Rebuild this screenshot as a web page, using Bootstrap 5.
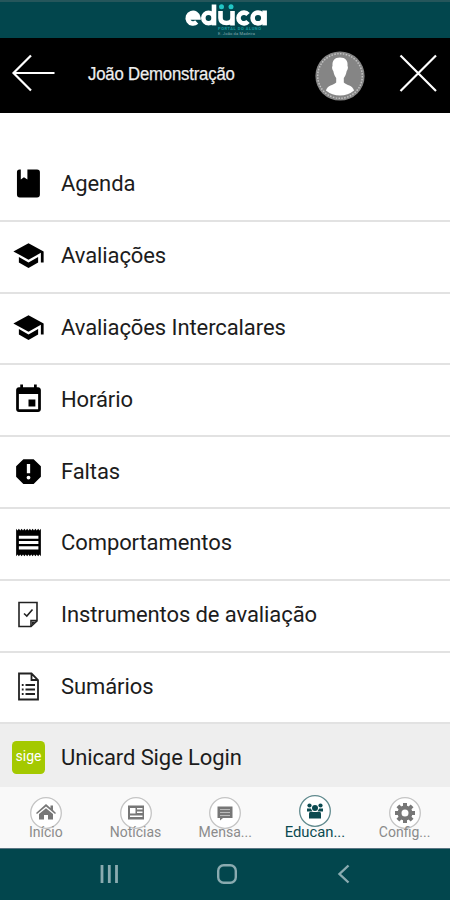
<!DOCTYPE html>
<html lang="pt">
<head>
<meta charset="utf-8">
<meta name="viewport" content="width=device-width, initial-scale=1">
<title>Educa</title>
<link href="https://cdn.jsdelivr.net/npm/bootstrap@5.3.0/dist/css/bootstrap.min.css" rel="stylesheet">
<style>
body { font-family: Roboto, sans-serif; width: 450px; height: 900px; background: #fff; }
svg { display: block; flex: none; }
.brand-bar { height: 38px; background: #02464d; border-top: 2px solid #25565b; padding-left: 184px; }
.top-bar { height: 75px; background: #000; padding-left: 11px; padding-right: 12px; }
.line-icon { margin-bottom: 5px; }
.user-name { font: 18px/24px "Liberation Sans", sans-serif; color: #eee; margin-left: 33px; width: 227px; padding-bottom: 3px; letter-spacing: -.2px; white-space: nowrap; }
.user-name span { display: inline-block; transform: scaleX(.93); transform-origin: left; -webkit-text-stroke: .25px #eee; }
.menu-list { height: 674px; padding-top: 37px; overflow: hidden; }
.menu-row { height: 71.8px; padding: 0 0 2px 12px; gap: 16px; border-bottom: 2px solid #e2e2e2; font-size: 22px; color: #1c1c1c; }
.menu-row > span { letter-spacing: -.09px; white-space: nowrap; }
.menu-row.active-row { background: #eee; border: 0; padding-bottom: 5px; }
.tab-bar { height: 61px; background: #f9f9f9; padding-left: 1px; }
.tab-cell { width: 89.7px; flex: none; color: #8b8b8b; font-size: 14px; line-height: 16px; padding-top: 9px; }
.tab-cell span { margin-top: -6px; }
.tab-cell.current { color: #0b4a50; font-size: 14.8px; padding-top: 7px; }
.tab-cell.current span { margin-top: -4px; }
.system-bar { height: 52px; background: #02464d; border-top: 1px solid #5b7684; padding: 0 99px 2px 99px; }
.home-key { margin-right: 3px; }
</style>
<script src="https://cdn.jsdelivr.net/npm/bootstrap@5.3.0/dist/js/bootstrap.bundle.min.js"></script>
</head>
<body class="d-flex flex-column overflow-hidden">
<header class="brand-bar flex-shrink-0">
  <svg width="90" height="34" viewBox="0 2 90 34">
    <g fill="none" stroke="#fff" stroke-width="4.6">
      <path d="M4 17.500H14.300A5.300 5.300 0 1 0 12.700 22"/>
      <circle cx="24.500" cy="18" r="5.200"/><path d="M30 4.500V25.400"/>
      <path d="M36.500 11V18Q36.500 23 42.500 23T48.500 18V11M48.500 18V25.400"/>
      <path d="M64 14.500A5.400 5.400 0 1 0 64 21.500"/>
      <circle cx="74" cy="18" r="5.400"/><path d="M80.600 10.500V25.400"/>
    </g>
    <g fill="#22c5c4"><circle cx="37.500" cy="6.800" r="2.500"/><circle cx="47" cy="6.800" r="2.500"/></g>
    <text x="34" y="30" font-size="4" font-weight="700" font-family="Roboto, sans-serif" fill="#169a9e" textLength="43">PORTAL DO ALUNO</text>
    <text x="34" y="35" font-size="4" font-family="Roboto, sans-serif" fill="#86a9ad" textLength="37">E. João da Madeira</text>
  </svg>
</header>
<nav class="top-bar d-flex align-items-center flex-shrink-0">
  <svg class="line-icon" width="44" height="40" viewBox="0 0 44 40" fill="none" stroke="#fff" stroke-width="2.200"><path d="M20 2.500 2.500 20 20 37.500M2.500 20H43.500"/></svg>
  <div class="user-name"><span>João Demonstração</span></div>
  <svg width="50" height="50" viewBox="0 0 50 50">
    <circle cx="25" cy="25" r="24.600" fill="#858585"/>
    <circle cx="25" cy="25" r="22.300" fill="none" stroke="#c4c4c4" stroke-width="1.500" stroke-dasharray="1.500 1.400"/>
    <path fill="#fff" d="M25 6.500C19.500 6.500 17 9.500 17.500 15C16.500 16 17.400 19 18.300 20C18.900 23.500 20 25.500 21.200 27V31.500C18 34.500 12.800 34 10.900 39.500Q17 44.500 25 44.500T39.100 39.500C37.200 34 32 34.500 28.800 31.500V27C30 25.500 31.100 23.500 31.700 20C32.600 19 33.500 16 32.500 15C33 9.500 30.500 6.500 25 6.500Z"/>
  </svg>
  <svg class="line-icon ms-auto" width="40" height="40" viewBox="0 0 40 40" fill="none" stroke="#fff" stroke-width="2.200"><path d="M2.500 2.500 38 38M38 2.500 2.500 38"/></svg>
</nav>
<main class="menu-list flex-shrink-0">
  <div class="menu-row d-flex align-items-center">
    <svg width="33" height="33" viewBox="0 0 24 24"><path d="M5.500 1.800H6.400V9L8.700 7.500 11.200 9V1.800H18.200Q20.300 1.800 20.300 3.900V20Q20.300 22.200 18.200 22.200H5.700Q3.600 22.200 3.600 20V3.900Q3.600 1.800 5.500 1.800Z"/></svg>
    <span>Agenda</span></div>
  <div class="menu-row d-flex align-items-center">
    <svg width="33" height="33" viewBox="0 0 24 24"><path d="M5 13.180v4L12 21l7-3.820v-4L12 17l-7-3.820zM12 3 1 9l11 6 9-4.910V17h2V9L12 3z"/></svg>
    <span>Avaliações</span></div>
  <div class="menu-row d-flex align-items-center">
    <svg width="33" height="33" viewBox="0 0 24 24"><path d="M5 13.180v4L12 21l7-3.820v-4L12 17l-7-3.820zM12 3 1 9l11 6 9-4.910V17h2V9L12 3z"/></svg>
    <span>Avaliações Intercalares</span></div>
  <div class="menu-row d-flex align-items-center">
    <svg width="33" height="33" viewBox="0 0 24 24"><path d="M17 12h-5v5h5v-5zM16 1v2H8V1H6v2H5c-1.110 0-1.990.9-1.990 2L3 19c0 1.100.89 2 2 2h14c1.100 0 2-.9 2-2V5c0-1.100-.9-2-2-2h-1V1h-2zm3 18H5V8h14v11z"/></svg>
    <span>Horário</span></div>
  <div class="menu-row d-flex align-items-center">
    <svg width="33" height="33" viewBox="0 0 24 24"><path d="M15.730 3H8.270L3 8.270v7.460L8.270 21h7.460L21 15.730V8.270L15.730 3zM12 17.800a1.400 1.400 0 1 1 0-2.800 1.400 1.400 0 0 1 0 2.800zm1.200-4.500h-2.400V6.500h2.400v6.800z"/></svg>
    <span>Faltas</span></div>
  <div class="menu-row d-flex align-items-center">
    <svg width="33" height="33" viewBox="0 0 24 24"><path d="M19.200 17H5v-2.300h14.200V17zm0-3.850H5v-2.300h14.200v2.300zm0-3.850H5V7h14.200v2.300zM3 22l1-1.200 1 1.200 1-1.200 1 1.200 1-1.200 1 1.200 1-1.200 1 1.200 1-1.200 1 1.200 1-1.200 1 1.200 1-1.200 1 1.200 1-1.200 1 1.200 1-1.200 1 1.200V2l-1 1.200L19 2l-1 1.200L17 2l-1 1.200L15 2l-1 1.200L13 2l-1 1.200L11 2l-1 1.200L9 2 8 3.200 7 2 6 3.200 5 2 4 3.200 3 2v20z"/></svg>
    <span>Comportamentos</span></div>
  <div class="menu-row d-flex align-items-center">
    <svg width="33" height="33" viewBox="0 0 33 33" fill="none" stroke="#222" stroke-width="1.600"><path d="M7 4.500H25V23L19 28.500H7ZM19 28.500V22.500H25M12 15.500 14.800 18 20.500 11.500"/><path d="M20 23.500H24L20 27Z" fill="#222" stroke="none"/></svg>
    <span>Instrumentos de avaliação</span></div>
  <div class="menu-row d-flex align-items-center">
    <svg width="33" height="33" viewBox="0 0 33 33" fill="none" stroke="#222" stroke-width="1.800"><path d="M7 3.500H19.500L26 10V29.500H7ZM19.500 3.500V10H26M13.500 15H23M13.500 19.500H23M13.500 24H23M9.800 15H11.600M9.800 19.500H11.600M9.800 24H11.600"/></svg>
    <span>Sumários</span></div>
  <div class="menu-row active-row d-flex align-items-center">
    <svg width="33" height="33" viewBox="0 0 33 33"><rect width="33" height="33" rx="4.500" fill="#a4c900"/><text x="3.500" y="20" font-family="Roboto, sans-serif" font-size="14" fill="#fff" textLength="26">sige</text></svg>
    <span>Unicard Sige Login</span></div>
</main>
<nav class="tab-bar d-flex flex-shrink-0">
  <div class="tab-cell d-flex flex-column align-items-center">
    <svg width="34" height="34" viewBox="0 0 34 34"><circle cx="17" cy="17" r="15.300" fill="#fff" stroke="#c4c4c4" stroke-width="1.300"/><path fill="#777" d="M17 8 21.500 12V9.500H24V14L27 17 26 18 17 10.500 8 18 7 17ZM17 12.200 24 18V23.500H19V19H15V23.500H10V18Z"/></svg>
    <span>Início</span></div>
  <div class="tab-cell d-flex flex-column align-items-center">
    <svg width="34" height="34" viewBox="0 0 34 34"><circle cx="17" cy="17" r="15.300" fill="#fff" stroke="#c4c4c4" stroke-width="1.300"/><path fill="#777" fill-rule="evenodd" d="M9 9.500H25V23.500H9ZM11 12V17.500H16.500V12ZM18 12V13.500H23.500V12ZM18 15.500V17H23.500V15.500ZM11 19.500V21H23.500V19.500Z"/></svg>
    <span>Notícias</span></div>
  <div class="tab-cell d-flex flex-column align-items-center">
    <svg width="34" height="34" viewBox="0 0 34 34"><circle cx="17" cy="17" r="15.300" fill="#fff" stroke="#c4c4c4" stroke-width="1.300"/><path fill="#777" d="M9.500 10.500H24.500V22H15L12 24.500V22H9.500Z"/><path stroke="#bbb" d="M12 13.500H22M12 16.500H22M12 19.500H22"/></svg>
    <span>Mensa...</span></div>
  <div class="tab-cell current d-flex flex-column align-items-center">
    <svg width="34" height="34" viewBox="0 0 34 34"><circle cx="17" cy="17" r="15.300" fill="#fff" stroke="#5f898d" stroke-width="1.300"/><g fill="#0b4a50"><circle cx="11.500" cy="11.500" r="2.100"/><circle cx="22.500" cy="11.500" r="2.100"/><circle cx="17" cy="14" r="3"/><path d="M9 14.500H12.800L14.500 17.500H9ZM25 14.500H21.200L19.500 17.500H25ZM12 18H22Q23 18 23 20V24.500H11V20Q11 18 12 18Z"/></g></svg>
    <span>Educan...</span></div>
  <div class="tab-cell d-flex flex-column align-items-center">
    <svg width="34" height="34" viewBox="0 0 34 34"><circle cx="17" cy="17" r="15.300" fill="#fff" stroke="#c4c4c4" stroke-width="1.300"/><circle cx="17" cy="17" r="5.500" fill="none" stroke="#777" stroke-width="4"/><path stroke="#777" stroke-width="4" d="M17 7V11M17 23V27M7 17H11M23 17H27M9.900 9.900 12.700 12.700M21.300 21.300 24.100 24.100M9.900 24.100 12.700 21.300M21.300 12.700 24.100 9.900"/></svg>
    <span>Config...</span></div>
</nav>
<footer class="system-bar d-flex justify-content-between align-items-center flex-shrink-0">
  <svg width="20" height="20" viewBox="0 0 20 20" stroke="#8aabb0" stroke-width="2.800"><path d="M3 1V19M10.300 1V19M17.500 1V19"/></svg>
  <svg class="home-key" width="20" height="20" viewBox="0 0 20 20" fill="none" stroke="#8aabb0" stroke-width="2.400"><rect x="1.200" y="1.200" width="17.600" height="17.600" rx="5.500"/></svg>
  <svg width="14" height="20" viewBox="0 0 14 20" fill="none" stroke="#8aabb0" stroke-width="2.400"><path d="M11.500 1.500 2.500 10 11.500 18.500"/></svg>
</footer>
</body>
</html>
